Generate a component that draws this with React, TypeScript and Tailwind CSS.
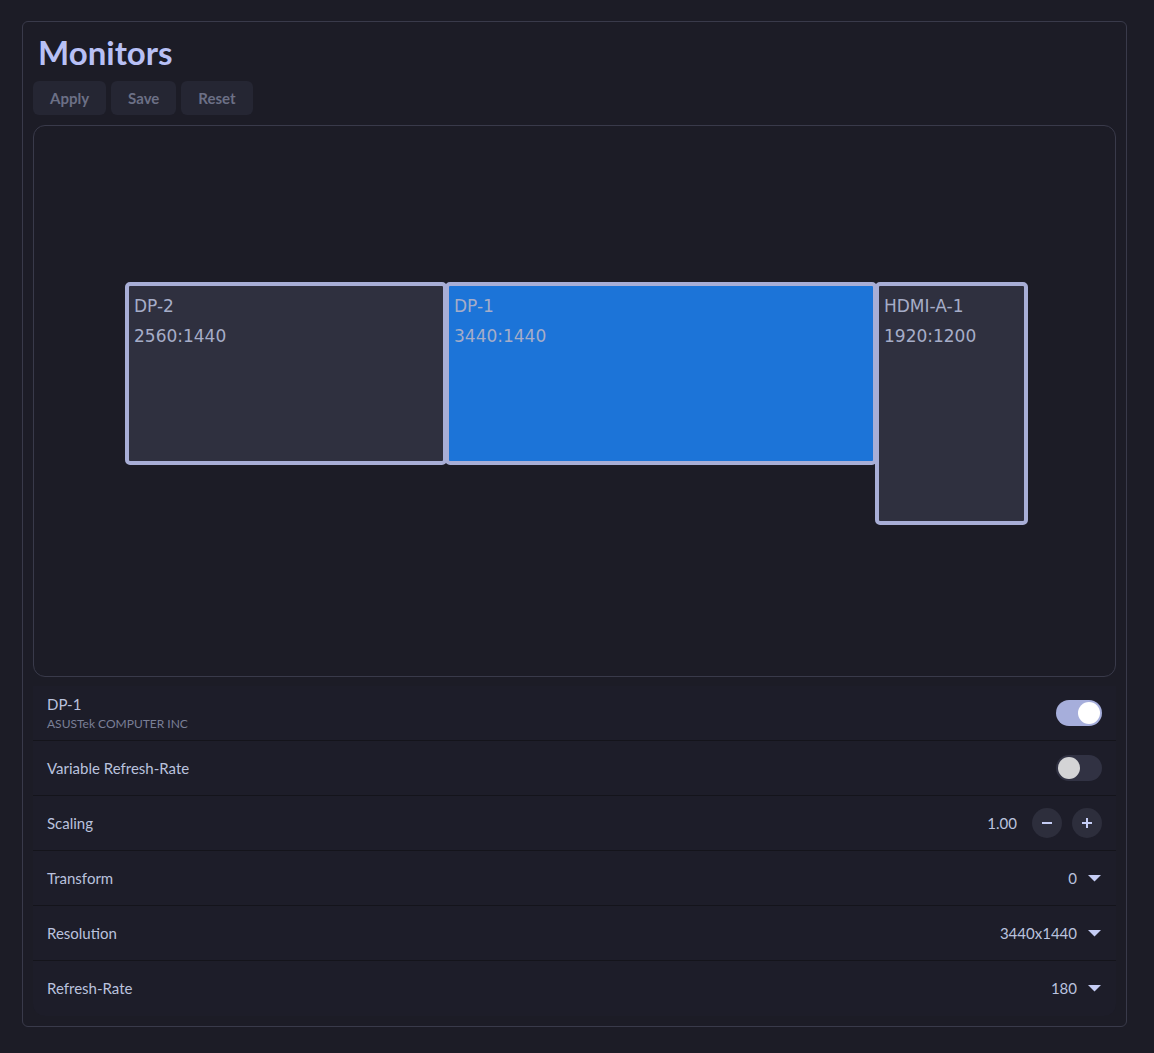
import { useState } from 'react';

type Mon = {
  name: string;
  res: string;
  left: number;
  width: number;
  height: number;
};

const monitors: Mon[] = [
  { name: 'DP-2', res: '2560:1440', left: 91, width: 322, height: 183 },
  { name: 'DP-1', res: '3440:1440', left: 411, width: 432, height: 183 },
  { name: 'HDMI-A-1', res: '1920:1200', left: 841, width: 153, height: 243 },
];

function Toggle({ on }: { on: boolean }) {
  return (
    <div
      className={
        'w-[46px] h-[26px] rounded-full flex items-center px-[2px] ' +
        (on ? 'bg-[#a6aedb] justify-end' : 'bg-[#313243] justify-start')
      }
    >
      <div className={'w-[22px] h-[22px] rounded-full ' + (on ? 'bg-white' : 'bg-[#d4d4d6]')}></div>
    </div>
  );
}

function Caret() {
  return (
    <svg width="13" height="7" viewBox="0 0 13 7" className="ml-[11px] mr-[1px]">
      <path d="M0 0 H13 L6.5 6.5 Z" fill="#c5cdf5" />
    </svg>
  );
}

function Row({ label, children, last }: { label: React.ReactNode; children?: React.ReactNode; last?: boolean }) {
  return (
    <div
      className={
        'h-[55px] flex items-center justify-between pl-[14px] pr-[14px] bg-[#1d1d29] ' +
        (last ? 'rounded-b-[12px]' : 'border-b border-[#14141b]')
      }
    >
      <div className="text-[15px] text-[#bac2de]">{label}</div>
      <div className="flex items-center text-[15px] text-[#bac2de]">{children}</div>
    </div>
  );
}

export default function App() {
  const [selected] = useState('DP-1');

  return (
    <div className="w-[1154px] h-[1053px] bg-[#1c1c26] pt-[21px] pl-[22px] font-['Lato','Noto_Sans',sans-serif]">
      <div className="w-[1105px] h-[1006px] border border-[#393a4a] rounded-[6px] px-[10px]">
        <h1 className="text-[33px] font-bold text-[#b8c0f5] leading-none pt-[14px] pl-[5px] h-[59px]">Monitors</h1>
        <div className="flex gap-[5px] h-[34px]">
          {['Apply', 'Save', 'Reset'].map((b) => (
            <button
              key={b}
              className="bg-[#252633] rounded-[6px] px-[17px] text-[15px] font-bold text-[#6c7086]"
            >
              {b}
            </button>
          ))}
        </div>
        <div className="mt-[10px] relative h-[552px] border border-[#393a4a] rounded-[12px] font-['DejaVu_Sans',sans-serif]">
          {monitors.map((m) => (
            <div
              key={m.name}
              className={
                'absolute top-[156px] border-[4px] border-[#a8aed6] rounded-[5px] px-[5px] pt-[12px] text-[17px] text-[#a6adc8] ' +
                (m.name === selected ? 'bg-[#1c74d8]' : 'bg-[#2f303f]')
              }
              style={{ left: m.left, width: m.width, height: m.height }}
            >
              <div className="leading-[16px]">{m.name}</div>
              <div className="leading-[16px] mt-[14px]">{m.res}</div>
            </div>
          ))}
        </div>
        <div className="mt-[9px]">
          <Row
            label={
              <div className="leading-tight">
                <div className="text-[15px] text-[#bac2de]">DP-1</div>
                <div className="text-[12px] text-[#7a7f96] mt-[2px]">ASUSTek COMPUTER INC</div>
              </div>
            }
          >
            <Toggle on={true} />
          </Row>
          <Row label="Variable Refresh-Rate">
            <Toggle on={false} />
          </Row>
          <Row label="Scaling">
            <span className="mr-[15px]">1.00</span>
            <div className="w-[30px] h-[30px] rounded-full bg-[#2d2e3c] flex items-center justify-center">
              <svg width="12" height="12" viewBox="0 0 12 12">
                <path d="M1 6 H11" stroke="#c5cdf5" strokeWidth="2" />
              </svg>
            </div>
            <div className="w-[30px] h-[30px] rounded-full bg-[#2d2e3c] flex items-center justify-center ml-[10px]">
              <svg width="12" height="12" viewBox="0 0 12 12">
                <path d="M1 6 H11 M6 1 V11" stroke="#c5cdf5" strokeWidth="2" />
              </svg>
            </div>
          </Row>
          <Row label="Transform">
            <span>0</span>
            <Caret />
          </Row>
          <Row label="Resolution">
            <span>3440x1440</span>
            <Caret />
          </Row>
          <Row label="Refresh-Rate" last>
            <span>180</span>
            <Caret />
          </Row>
        </div>
      </div>
    </div>
  );
}
